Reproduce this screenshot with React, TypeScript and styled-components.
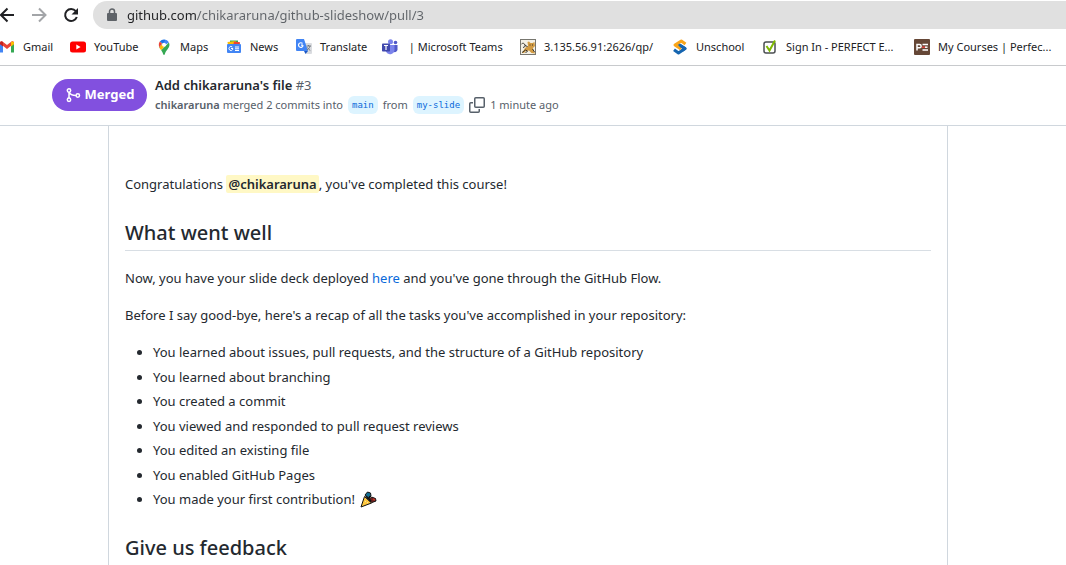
import React from "react";
import styled, { createGlobalStyle } from "styled-components";

const GlobalStyle = createGlobalStyle`
  * { box-sizing: border-box; }
  html, body { height: 100%; }
  body {
    margin: 0;
    overflow: hidden;
    background: #ffffff;
    color: #24292f;
    font: 13px/21px "Noto Sans", "Segoe UI", sans-serif;
  }
  a { text-decoration: none; color: inherit; }
`;

const Toolbar = styled.nav`
  display: flex;
  align-items: center;
  margin-left: -1px;
  padding-top: 1px;
`;

const NavButtons = styled.div`
  display: flex;
  gap: 16px;
  padding-right: 14px;
`;

const NavButton = styled.button<{ $muted?: boolean }>`
  display: flex;
  border: 0;
  padding: 0;
  background: none;
  color: ${(p) => (p.$muted ? "#a3a5a8" : "#202124")};
`;

const AddressBar = styled.label`
  display: flex;
  flex: 1;
  align-items: center;
  gap: 9px;
  height: 28px;
  padding-left: 13px;
  border-radius: 14px 0 0 14px;
  background: #e0e0e0;
`;

const AddressInput = styled.input`
  flex: 1;
  min-width: 0;
  height: 24px;
  border: 0;
  padding: 0;
  outline: 0;
  font: 13px/24px "Noto Sans", "Segoe UI", sans-serif;
  color: transparent;
  background: linear-gradient(to right, #202124 70px, #5f6368 70px);
  background-clip: text;
  -webkit-background-clip: text;
`;

const Bookmarks = styled.div`
  display: flex;
  align-items: center;
  height: 37px;
  overflow: hidden;
  border-bottom: 1px solid #c8cacd;
`;

const Bookmark = styled.a<{ $width: number }>`
  display: flex;
  flex: none;
  align-items: center;
  gap: 8px;
  width: ${(p) => p.$width}px;
  font-size: 11px;
  line-height: 16px;
  white-space: pre;
  color: #202124;
  svg { flex: none; }
  &:first-child { margin-left: -1px; }
`;

const PullHeader = styled.header`
  display: flex;
  align-items: center;
  gap: 8px;
  height: 60px;
  padding: 0 52px 2px;
  border-bottom: 1px solid #d0d7de;
`;

const State = styled.span`
  display: flex;
  align-items: center;
  justify-content: center;
  gap: 4px;
  width: 95px;
  height: 32px;
  border-radius: 16px;
  background: #8250df;
  color: #ffffff;
  font-weight: 700;
`;

const PullTitle = styled.h1`
  margin: 0;
  font-size: 13px;
  line-height: 20px;
  font-weight: 600;
`;

const Muted = styled.span`
  color: #57606a;
  font-weight: 400;
`;

const PullMeta = styled.div`
  display: flex;
  align-items: center;
  gap: 5px;
  color: #57606a;
  font-size: 11px;
  line-height: 20px;
`;

const Author = styled.a`
  font-weight: 600;
`;

const Branch = styled.a`
  padding: 0 4px;
  border-radius: 6px;
  background: #ddf4ff;
  color: #0969da;
  font: 9px/18px "DejaVu Sans Mono", monospace;
`;

const CopyButton = styled.button`
  display: flex;
  border: 0;
  padding: 0;
  background: none;
  color: #57606a;
`;

const Comment = styled.main`
  margin: 0 118px 0 108px;
  padding: 48px 16px 0;
  border: solid #d0d7de;
  border-width: 0 1px;
`;

const Paragraph = styled.p`
  margin: 0 0 16px;
`;

const Heading = styled.h2`
  margin: 24px 0 17px;
  padding-bottom: 4px;
  border-bottom: 1px solid #d8dee4;
  font-size: 20px;
  line-height: 27px;
  font-weight: 500;
`;

const Mention = styled.a`
  padding: 0 2px;
  border-radius: 2px;
  background: #fff8c5;
  font-weight: 600;
`;

const TextLink = styled.a`
  color: #0969da;
`;

const TaskList = styled.ul`
  margin: 0 0 24px;
  padding-left: 28px;
  li + li { margin-top: 3px; }
  li:nth-child(even) { margin-top: 4px; }
  svg { vertical-align: -4px; margin-left: 2px; }
`;

const Arrow = ({ flip }: { flip?: boolean }) => (
  <svg width="16" height="16" viewBox="0 0 16 16" fill="none" stroke="currentColor" strokeWidth="2">
    <path d={flip ? "M1 8h13M8 1.5 14.5 8 8 14.5" : "M15 8H2M8.500 1.500 2 8l6.500 6.500"} />
  </svg>
);

const Reload = () => (
  <svg width="16" height="16" viewBox="0 0 16 16">
    <path d="M12.800 4.200A6 6 0 1 0 13.800 10" fill="none" stroke="currentColor" strokeWidth="2" />
    <path d="M15 1v6.500H8.500z" fill="currentColor" />
  </svg>
);

const Lock = () => (
  <svg width="12" height="14" viewBox="0 0 12 14">
    <rect x="1" y="5" width="10" height="8" rx="1" fill="#5f6368" />
    <path d="M3.500 5.500V3.500a2.500 2.500 0 0 1 5 0v2" fill="none" stroke="#5f6368" strokeWidth="1.500" />
  </svg>
);

const Icon = ({ children }: { children: React.ReactNode }) => (
  <svg width="16" height="16" viewBox="0 0 16 16">{children}</svg>
);

const Gmail = () => (
  <Icon>
    <path d="M1 4v9.500h3V7z" fill="#4285f4" />
    <path d="M12 7v6.500h3V4z" fill="#34a853" />
    <path d="M1 4.500V4c0-1.800 1.700-2 2.800-1.200L8 6l4.200-3.200C13.300 2 15 2.200 15 4v.5L8 10z" fill="#ea4335" />
    <path d="M12 3v4.500l3-2.300V4c0-1.800-1.700-2-3-1z" fill="#fbbc04" />
    <path d="M1 4v1.200l3 2.300V3C2.700 2 1 2.200 1 4z" fill="#c5221f" />
  </Icon>
);

const YouTube = () => (
  <Icon>
    <rect x="0" y="2.500" width="16" height="11" rx="2.500" fill="#ff0000" />
    <path d="M6.300 5.600v4.800L10.600 8z" fill="#fff" />
  </Icon>
);

const Maps = () => (
  <Icon>
    <path d="M8 .5c2.200 0 4 1.200 4.900 3L3.700 9.300 3.200 8 9.700.8z" fill="#4285f4" />
    <path d="M8 .5a5.400 5.400 0 0 0-4.200 2L7 5.200l2.700-4.400z" fill="#1a73e8" />
    <path d="M3.200 8.200 6.500 4.500 9 7l-3.800 4.300C4.300 10.200 3.600 9.300 3.200 8.200z" fill="#fbbc04" />
    <path d="M12.900 3.500c1.300 2.700.2 5-1.500 7C10 12.200 9.300 13.500 8.800 15.200c-.3.900-1.300.9-1.600 0-.4-1.500-1-2.600-2-3.900z" fill="#34a853" />
    <path d="M3.800 2.500 6 4.400 3.300 8.200C2.400 6.200 2.800 3.800 3.800 2.500z" fill="#ea4335" />
    <circle cx="8" cy="5.800" r="2" fill="#fff" />
  </Icon>
);

const News = () => (
  <Icon>
    <path d="M4 1.500h8v6H4z" fill="#34a853" />
    <path d="m1.500 3 8-1 2 6-9 1z" fill="#fbbc04" />
    <path d="m8 2.500 6 .8-.5 4H7z" fill="#ea4335" />
    <rect x="1" y="5" width="14" height="9" rx="1" fill="#4285f4" />
    <path d="M7 9.500H5M6.300 8a2 2 0 1 0 .4 2.500V9.500M9 8h4M9 9.800h4M9 11.500h4" fill="none" stroke="#fff" />
  </Icon>
);

const Translate = () => (
  <Icon>
    <path d="M7 4h8a1 1 0 0 1 1 1v9a1 1 0 0 1-1 1h-5z" fill="#dadce0" />
    <path d="M1 0h7l4 12H1a1 1 0 0 1-1-1V1a1 1 0 0 1 1-1z" fill="#4285f4" />
    <path d="m8 12h4l-2.500 3z" fill="#1a57c5" />
    <path d="M7 6.200H5M6.500 4.500a2.300 2.300 0 1 0 .6 1.700" fill="none" stroke="#fff" strokeWidth="1.200" />
    <path d="M10.500 7h4.500M12.500 6v1M14 7c-.5 2-1.500 3-3 4M11.500 8.500c.6 1.300 1.400 2 2.800 3" fill="none" stroke="#727980" />
  </Icon>
);

const Teams = () => (
  <Icon>
    <circle cx="8.500" cy="2.800" r="2.500" fill="#7b83eb" />
    <circle cx="13.500" cy="3.500" r="1.800" fill="#5059c9" />
    <path d="M10 6h5.500v4.500a2.700 2.700 0 0 1-4 2.300z" fill="#5059c9" />
    <path d="M4 6h8.500v5a4.500 4.500 0 0 1-8.500 1.800z" fill="#7b83eb" />
    <rect x="0" y="4.500" width="8" height="8" rx=".8" fill="#4048ad" />
    <path d="M2 6.500h4M4 6.500v4.500" stroke="#fff" strokeWidth="1.200" />
  </Icon>
);

const Tomcat = () => (
  <Icon>
    <rect x=".5" y=".5" width="15" height="15" fill="#f3f0e6" stroke="#77766f" />
    <path d="m2 14 3-5 3-2-.5-4L9 2.500l1.500 1.500h2L14.500 3l.5 4-2 2 .5 3 2 2.500-4-.5-2.500-2.500-3 .5L4 14z" fill="#d29b43" />
    <path d="M1.500 5c1.500-1.500 3-.5 3.500 1s-.5 2-2 2.500M2 13.500 5.500 11l2 1-2 2M12.500 10l2 3M5 6.500l2.500 1M9.500 6h1M12 6h1" fill="none" stroke="#39342a" />
  </Icon>
);

const Unschool = () => (
  <Icon>
    <path d="m2 10.700 4.500 3.300 6.500-4.500L6 5" fill="none" stroke="#1565b0" strokeWidth="3" strokeLinejoin="round" />
    <path d="M13.500 5 9.300 2 3 6l6 4" fill="none" stroke="#f9a51a" strokeWidth="3" strokeLinejoin="round" />
    <path d="m8 6.500 5 3-3 2" fill="none" stroke="#1565b0" strokeWidth="3" strokeLinejoin="round" />
  </Icon>
);

const SignIn = () => (
  <Icon>
    <rect x="2" y="3" width="11" height="11" rx="2" fill="#fff" stroke="#4b4f52" strokeWidth="1.500" />
    <path d="m4.500 7 3 4.500L13 1.500" fill="none" stroke="#7fba00" strokeWidth="2" />
  </Icon>
);

const Perfect = () => (
  <Icon>
    <rect width="16" height="16" rx="1" fill="#654736" />
    <path d="M3 11.500V5.500h2.500a1.500 1.500 0 0 1 0 3.300H3M14 5.500H8.500M8.500 11H14" fill="none" stroke="#fff" strokeWidth="1.500" />
    <path d="M8 8.200h3" stroke="#e2433b" strokeWidth="1.500" />
    <path d="M11 8.200h2.500" stroke="#fff" strokeWidth="1.500" />
  </Icon>
);

const Merge = () => (
  <svg width="16" height="16" viewBox="0 0 16 16" fill="none" stroke="currentColor" strokeWidth="1.500">
    <circle cx="4" cy="3.500" r="1.700" />
    <circle cx="4" cy="12.800" r="1.700" />
    <circle cx="12.800" cy="8.500" r="1.700" />
    <path d="M4 5v6M4 5c1 2.500 3.500 3.500 7 3.500" />
  </svg>
);

const Copy = () => (
  <svg width="16" height="16" viewBox="0 0 16 16" fill="none" stroke="currentColor" strokeWidth="1.500">
    <rect x="5.750" y=".75" width="9.500" height="9.500" rx="1" />
    <path d="M4 5.750H1.750a1 1 0 0 0-1 1v7.500a1 1 0 0 0 1 1h7.500a1 1 0 0 0 1-1V12" />
  </svg>
);

const Popper = () => (
  <svg width="17" height="17" viewBox="0 0 17 17" role="img" aria-label="party popper">
    <path d="m4.500 5.500 7 6.500L1 16z" fill="#ffc83d" stroke="#111" strokeLinejoin="round" />
    <path d="m5 4 2.500-3 3 1 .5 3-3 3z" fill="#126d91" stroke="#111" />
    <path d="m8.500 9 3-3 4 1.500.5 2.500-4 1.500z" fill="#6d211e" stroke="#111" />
    <path d="m6 5 5 5M10 5l-1.500 3.500" stroke="#111" strokeWidth="1.500" />
    <path d="m13 8 2 1" stroke="#c73528" strokeWidth="1.500" />
    <path d="m5 10 1 1M7 11l1 1" stroke="#f3e0a0" />
  </svg>
);

const bookmarks = [
  { label: "Gmail", width: 71, icon: <Gmail /> },
  { label: "YouTube", width: 86, icon: <YouTube /> },
  { label: "Maps", width: 70, icon: <Maps /> },
  { label: "News", width: 70, icon: <News /> },
  { label: "Translate", width: 86, icon: <Translate /> },
  { label: " | Microsoft Teams", width: 138, icon: <Teams /> },
  { label: "3.135.56.91:2626/qp/", width: 152, icon: <Tomcat /> },
  { label: "Unschool", width: 90, icon: <Unschool /> },
  { label: "Sign In - PERFECT E...", width: 152, icon: <SignIn /> },
  { label: "My Courses | Perfec...", width: 144, icon: <Perfect /> },
];

const tasks = [
  "You learned about issues, pull requests, and the structure of a GitHub repository",
  "You learned about branching",
  "You created a commit",
  "You viewed and responded to pull request reviews",
  "You edited an existing file",
  "You enabled GitHub Pages",
];

export default function App() {
  return (
    <>
      <GlobalStyle />
      <Toolbar>
        <NavButtons>
          <NavButton aria-label="Back"><Arrow /></NavButton>
          <NavButton aria-label="Forward" $muted><Arrow flip /></NavButton>
          <NavButton aria-label="Reload"><Reload /></NavButton>
        </NavButtons>
        <AddressBar>
          <Lock />
          <AddressInput aria-label="Address" defaultValue="github.com/chikararuna/github-slideshow/pull/3" />
        </AddressBar>
      </Toolbar>
      <Bookmarks>
        {bookmarks.map((b) => (
          <Bookmark key={b.label} href="#" $width={b.width}>
            {b.icon}
            {b.label}
          </Bookmark>
        ))}
      </Bookmarks>
      <PullHeader>
        <State><Merge />Merged</State>
        <div>
          <PullTitle>Add chikararuna's file <Muted>#3</Muted></PullTitle>
          <PullMeta>
            <span><Author href="#">chikararuna</Author> merged 2 commits into</span>
            <Branch href="#">main</Branch>
            <span>from</span>
            <Branch href="#">my-slide</Branch>
            <CopyButton aria-label="Copy branch name"><Copy /></CopyButton>
            <span>1 minute ago</span>
          </PullMeta>
        </div>
      </PullHeader>
      <Comment>
        <Paragraph>
          Congratulations <Mention href="#">@chikararuna</Mention>, you've completed this course!
        </Paragraph>
        <Heading>What went well</Heading>
        <Paragraph>
          Now, you have your slide deck deployed <TextLink href="#">here</TextLink> and you've gone through the GitHub Flow.
        </Paragraph>
        <Paragraph>
          Before I say good-bye, here's a recap of all the tasks you've accomplished in your repository:
        </Paragraph>
        <TaskList>
          {tasks.map((t) => <li key={t}>{t}</li>)}
          <li>You made your first contribution! <Popper /></li>
        </TaskList>
        <Heading>Give us feedback</Heading>
      </Comment>
    </>
  );
}
